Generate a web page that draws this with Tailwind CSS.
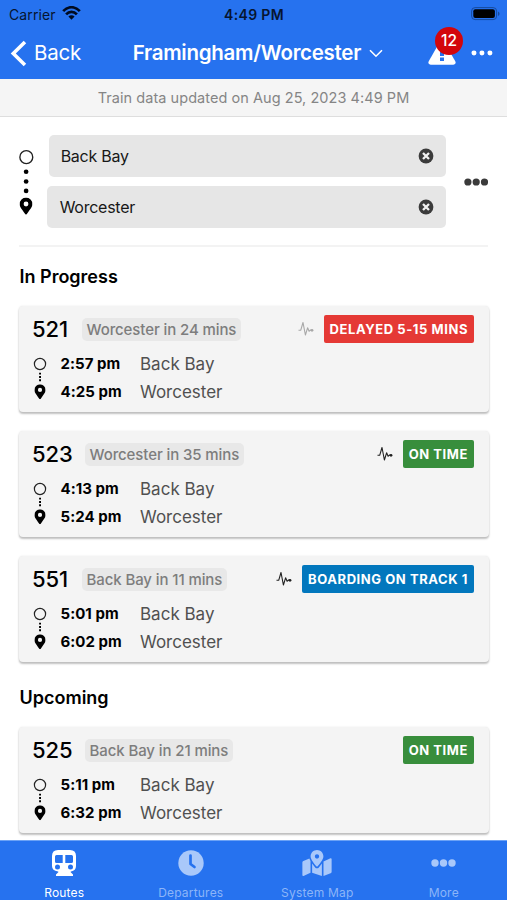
<!DOCTYPE html>
<html lang="en">
<head>
<meta charset="utf-8">
<title>Framingham/Worcester</title>
<script src="https://cdn.jsdelivr.net/npm/@tailwindcss/browser@4"></script>
</head>
<body class="w-[507px] h-[900px] overflow-hidden bg-white font-['Inter',sans-serif] text-black">
<svg class="hidden">
  <symbol id="pin" viewBox="0 0 384 512"><path fill-rule="evenodd" d="M172 502C27 291 0 270 0 192a192 192 0 1 1 384 0c0 78-27 99-172 310-10 14-31 14-40 0zM192 264a72 72 0 1 0 0-144 72 72 0 0 0 0 144z"/></symbol>
  <symbol id="dots" viewBox="0 0 25 8"><circle cx="4" cy="4" r="3.7"/><circle cx="12.5" cy="4" r="3.7"/><circle cx="21" cy="4" r="3.7"/></symbol>
  <symbol id="clear" viewBox="0 0 16 16"><circle cx="8" cy="8" r="7.4" fill="#3b3b3b"/><path d="M5 5l6 6M11 5l-6 6" stroke="#f1f1f1" stroke-width="2.3"/></symbol>
  <symbol id="pulse" viewBox="0 0 16 16"><path d="M.5 9.3h2.2L5 1.5 7.4 14l2.2-7.2 1.5 3.5 1.2-1.2h1" fill="none" stroke="currentColor" stroke-width="1.1" stroke-linejoin="round"/><circle cx="14" cy="9.3" r="1.4" fill="currentColor"/></symbol>
  <symbol id="trip" viewBox="0 0 14 44"><circle cx="7" cy="8" r="5.6" fill="none" stroke="#222" stroke-width="1.2"/><path d="M6.1 16.7H8v1.900H6.100zM6.100 20H8v1.900H6.100zM6.100 23.300H8v1.900H6.100z"/><use href="#pin" x="1.4" y="28.3" width="11.2" height="15"/></symbol>
</svg>
<div class="flex h-full flex-col">
  <header class="h-[79px] shrink-0 bg-[#2672ef]">
    <div class="grid h-7 grid-cols-3 items-center px-[9px] text-[14px] text-[#061530]">
      <div class="flex items-center gap-[6px]"><span class="tracking-[0.1px]">Carrier</span>
        <svg class="mb-[2px] h-[14px] w-[19px]" viewBox="0 0 19 14" fill="none" stroke="#000b20" stroke-width="2.7"><path d="M1.2 5.2C6-.1 13-.1 17.8 5.2M4.1 8.3c3.1-3.3 7.7-3.3 10.8 0"/><path d="M6.4 10.5c1.8-1.7 4.4-1.7 6.2 0L9.5 13.7z" fill="#000b20" stroke="none"/></svg>
      </div>
      <div class="pl-px text-center font-semibold tracking-[0.35px] whitespace-nowrap">4:49 PM</div>
      <svg class="mr-[-3px] mb-px h-[14px] w-[30px] justify-self-end" viewBox="0 0 30 14"><rect x=".6" y=".6" width="25" height="12" rx="3.5" fill="none" stroke="#174a9c"/><rect x="2.3" y="2.3" width="21.6" height="8.8" rx="2" fill="#000"/><path d="M27 4.5c2 .8 2 3.7 0 4.5z" fill="#174a9c"/></svg>
    </div>
    <div class="flex h-[50px] items-center pl-[10px] pr-[14px] text-white">
      <svg class="h-[27px] w-[17px]" viewBox="0 0 17 27" fill="none" stroke="white" stroke-width="3.6"><path d="M15 2L3.3 13.5 15 25"/></svg>
      <span class="ml-[7px] w-[99px] text-[20.5px] tracking-[-0.2px]">Back</span>
      <span class="w-[229px] text-[20.5px] font-semibold tracking-[-0.27px] whitespace-nowrap">Framingham/Worcester</span>
      <svg class="ml-[8px] h-[9px] w-[14px]" viewBox="0 0 14 9" fill="none" stroke="white" stroke-width="1.6"><path d="M1 1.2l6 6 6-6"/></svg>
      <div class="relative ml-[45px] h-[25px] w-[28px]">
        <svg class="h-[25px] w-[28px]" viewBox="0 0 28 25"><path d="M12 .5q2-2.800 4 0l11.400 20q1 3-2 3.200H2.600q-3-.2-2-3.200z" fill="#fff"/><path d="M12 7h4v8h-4zM12 16.500h4v3.500h-4z" fill="#2672ef"/></svg>
        <span class="absolute top-[-14px] left-[7px] flex size-[28px] items-center justify-center rounded-full bg-[#d3060b] text-[15.5px] font-medium">12</span>
      </div>
      <svg class="ml-[15px] h-[6px] w-[22px]" viewBox="0 0 22 6" fill="white"><circle cx="3" cy="3" r="2.5"/><circle cx="11" cy="3" r="2.500"/><circle cx="19" cy="3" r="2.500"/></svg>
    </div>
  </header>
  <div class="flex h-[38px] shrink-0 items-center justify-center border-b border-[#dedede] bg-[#f5f5f5] text-[14.5px] text-[#858585]"><span class="tracking-[0.05px] whitespace-nowrap">Train data updated on Aug 25, 2023 4:49 PM</span></div>
  <main class="flex-1 overflow-hidden px-[19px] pt-[18px]">
    <section class="flex h-[93px] items-center">
      <svg class="h-[93px] w-[15px]" viewBox="0 0 15 93"><circle cx="7.500" cy="21.500" r="6.600" fill="none" stroke="#222" stroke-width="1.400"/><circle cx="7.300" cy="36.500" r="2.400"/><circle cx="7.300" cy="46.500" r="2.400"/><circle cx="7.300" cy="56.200" r="2.400"/><use href="#pin" x=".5" y="63" width="13.400" height="17.500"/></svg>
      <div class="ml-[13px] flex w-[399px] flex-col items-end gap-[9px] text-[16px] text-[#181818]">
        <div class="flex h-[42px] w-[397px] items-center justify-between rounded-[5px] bg-[#e6e6e6] pr-[12px] pl-[12px]"><span class="tracking-[-0.25px]">Back Bay</span><svg class="size-4"><use href="#clear"/></svg></div>
        <div class="flex h-[42px] w-[399px] items-center justify-between rounded-[5px] bg-[#e6e6e6] pr-[12px] pl-[13px]"><span class="tracking-[-0.25px]">Worcester</span><svg class="size-4"><use href="#clear"/></svg></div>
      </div>
      <svg class="ml-[18px] h-2 w-[25px] fill-[#3b3b3b]"><use href="#dots"/></svg>
    </section>
    <div class="mt-[17px] h-[2px] bg-[#f3f3f3]"></div>
    <h2 class="mt-[16px] ml-[0.5px] h-[28px] text-[18px] leading-[28px] font-semibold">In Progress</h2>
    <div id="progress" class="mt-[15px] flex flex-col gap-[19px]"></div>
    <h2 class="mt-[22px] ml-[0.5px] h-[28px] text-[18px] leading-[28px] font-semibold">Upcoming</h2>
    <div id="upcoming" class="mt-[15px] flex flex-col gap-[19px]"></div>
  </main>
  <nav class="grid h-[60px] shrink-0 grid-cols-4 border-t border-[#6ba2f6] bg-[#2672ef] pl-px text-[12px] text-[#8cb5f8]">
    <div class="flex flex-col items-center pt-[9px] text-white">
      <svg class="h-[26px] w-[24px]" viewBox="0 0 24 26"><path fill="#fff" fill-rule="evenodd" d="M6 0h12q6 0 6 6v10q0 4.500-5 5.500l-.5.500 2.500 2.500v1.500H4v-1.500L6.500 22l-.5-.500Q0 20.500 0 16V6Q0 0 6 0zM4.500 5q-1.500 0-1.500 1.500v5Q3 13 4.500 13h6.200V5zM13.300 5v8h6.200q1.500 0 1.500-1.500v-5Q21 5 19.500 5zM5.500 14.600a2.500 2.500 0 1 0 0 5 2.500 2.500 0 0 0 0-5zM18.500 14.600a2.500 2.500 0 1 0 0 5 2.500 2.500 0 0 0 0-5z"/></svg>
      <span class="mt-[8px] leading-[18px] tracking-[0.2px]">Routes</span>
    </div>
    <div class="flex flex-col items-center pt-[9px]">
      <svg class="size-[26px]" viewBox="0 0 26 26"><circle cx="13" cy="13" r="12.700" fill="#a9c8fa"/><path d="M12.500 5.500V14l4 3" fill="none" stroke="#2672ef" stroke-width="2.700" stroke-linecap="round" stroke-linejoin="round"/></svg>
      <span class="mt-[8px] leading-[18px] tracking-[0.2px]">Departures</span>
    </div>
    <div class="flex flex-col items-center pt-[9px]">
      <svg class="h-[26px] w-[30px]" viewBox="0 0 576 512" fill="#a9c8fa"><path d="M288 0c-69.590 0-126 56.410-126 126 0 56.260 82.350 158.800 113.900 196.020 6.390 7.540 17.820 7.540 24.200 0C331.650 284.800 414 182.260 414 126 414 56.410 357.590 0 288 0zm0 168c-23.200 0-42-18.800-42-42s18.800-42 42-42 42 18.800 42 42-18.800 42-42 42zM20.120 215.950A32.006 32.006 0 0 0 0 245.660v250.320c0 11.320 11.430 19.060 21.940 14.860L160 448V214.920c-8.840-15.980-16.070-31.540-21.250-46.420L20.120 215.950zM288 359.670c-14.070 0-27.380-6.180-36.510-16.960-19.660-23.200-40.570-49.620-59.490-76.720v182l192 64V266c-18.920 27.090-39.820 53.520-59.490 76.720-9.130 10.770-22.440 16.950-36.510 16.950zm266.060-198.510L416 224v288l139.880-55.950A31.996 31.996 0 0 0 576 426.340V176.020c0-11.320-11.430-19.060-21.940-14.860z"/></svg>
      <span class="mt-[8px] leading-[18px] tracking-[0.2px]">System Map</span>
    </div>
    <div class="flex flex-col items-center pt-[9px]">
      <svg class="my-[9px] h-2 w-[25px] fill-[#a9c8fa]"><use href="#dots"/></svg>
      <span class="mt-[8px] leading-[18px] tracking-[0.2px]">More</span>
    </div>
  </nav>
</div>
<script>
const card = ([num, eta, depart, arrive, status, tone, pulse, numWidth]) => `
<article class="h-[106px] w-[470px] rounded-[4px] bg-[#f4f4f4] pt-[9px] pr-[15px] pl-[13px] shadow-[0_2px_2px_rgba(0,0,0,0.24),0_0_2px_rgba(0,0,0,0.1)]">
  <div class="flex h-[28px] items-center">
    <span class="pt-px text-[22px] font-medium tracking-[-0.1px] ${numWidth}">${num}</span>
    <span class="mt-px flex h-[23px] items-center rounded-[5px] bg-[#e8e8e8] px-[5px] pt-px text-[15px] font-medium tracking-[-0.1px] text-[#7d7d7d]">${eta}</span>
    <svg class="mr-[10px] ml-auto size-4 ${pulse}"><use href="#pulse"/></svg>
    <span class="flex h-[28px] items-center rounded-[2px] pr-[6px] pl-[6px] pt-px text-[13px] font-bold tracking-[0.57px] text-white ${tone}">${status}</span>
  </div>
  <div class="mt-[7px] flex">
    <svg class="mt-[6px] ml-px h-[44px] w-[14px]"><use href="#trip"/></svg>
    <div class="ml-[13.5px] w-[79.5px] text-[15px] leading-[28px] font-bold tracking-[0.05px]"><div>${depart} pm</div><div>${arrive} pm</div></div>
    <div class="text-[17px] leading-[28px] text-[#505050]"><div>Back Bay</div><div>Worcester</div></div>
  </div>
</article>`;
document.getElementById('progress').innerHTML = [
  ['521', 'Worcester in 24 mins', '2:57', '4:25', 'DELAYED 5-15 MINS', 'bg-[#e53935]', 'text-[#a8a8a8]', 'w-[49.5px]'],
  ['523', 'Worcester in 35 mins', '4:13', '5:24', 'ON TIME', 'bg-[#388e3c]', 'text-[#202020]', 'w-[52.500px]'],
  ['551', 'Back Bay in 11 mins', '5:01', '6:02', 'BOARDING ON TRACK 1', 'bg-[#0277bd]', 'text-[#202020]', 'w-[49.5px]'],
].map(card).join('');
document.getElementById('upcoming').innerHTML = card(['525', 'Back Bay in 21 mins', '5:11', '6:32', 'ON TIME', 'bg-[#388e3c]', 'invisible', 'w-[52.500px]']);
</script>
</body>
</html>
